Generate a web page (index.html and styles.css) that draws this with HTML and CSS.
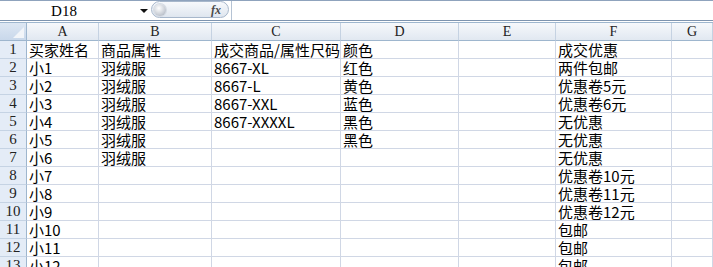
FILE: index.html
```html
<!DOCTYPE html>
<html lang="zh-CN">
<head>
  <meta charset="UTF-8" />
  <title>Book1 - Excel</title>
  <link rel="stylesheet" href="styles.css">
</head>
<body>

  <!-- formula bar -->
  <div class="formula-bar">
    <div class="name-box">
      <span class="cell-ref">D18</span>
      <span class="drop-arrow"></span>
    </div>
    <div class="fx-pill">
      <span class="knob"></span>
      <span class="fx">fx</span>
    </div>
    <div class="formula-input"></div>
  </div>

  <div class="sheet">
    <div class="row head-row">
      <div class="corner"></div>
      <div class="col-head">A</div>
      <div class="col-head">B</div>
      <div class="col-head">C</div>
      <div class="col-head">D</div>
      <div class="col-head">E</div>
      <div class="col-head">F</div>
      <div class="col-head">G</div>
    </div>

    <div class="row"><div class="row-head">1</div><div class="cell">买家姓名</div><div class="cell">商品属性</div><div class="cell">成交商品/属性尺码</div><div class="cell">颜色</div><div class="cell"></div><div class="cell">成交优惠</div><div class="cell"></div></div>
    <div class="row"><div class="row-head">2</div><div class="cell">小1</div><div class="cell">羽绒服</div><div class="cell">8667-XL</div><div class="cell">红色</div><div class="cell"></div><div class="cell">两件包邮</div><div class="cell"></div></div>
    <div class="row"><div class="row-head">3</div><div class="cell">小2</div><div class="cell">羽绒服</div><div class="cell">8667-L</div><div class="cell">黄色</div><div class="cell"></div><div class="cell">优惠卷5元</div><div class="cell"></div></div>
    <div class="row"><div class="row-head">4</div><div class="cell">小3</div><div class="cell">羽绒服</div><div class="cell">8667-XXL</div><div class="cell">蓝色</div><div class="cell"></div><div class="cell">优惠卷6元</div><div class="cell"></div></div>
    <div class="row"><div class="row-head">5</div><div class="cell">小4</div><div class="cell">羽绒服</div><div class="cell">8667-XXXXL</div><div class="cell">黑色</div><div class="cell"></div><div class="cell">无优惠</div><div class="cell"></div></div>
    <div class="row"><div class="row-head">6</div><div class="cell">小5</div><div class="cell">羽绒服</div><div class="cell"></div><div class="cell">黑色</div><div class="cell"></div><div class="cell">无优惠</div><div class="cell"></div></div>
    <div class="row"><div class="row-head">7</div><div class="cell">小6</div><div class="cell">羽绒服</div><div class="cell"></div><div class="cell"></div><div class="cell"></div><div class="cell">无优惠</div><div class="cell"></div></div>
    <div class="row"><div class="row-head">8</div><div class="cell">小7</div><div class="cell"></div><div class="cell"></div><div class="cell"></div><div class="cell"></div><div class="cell">优惠卷10元</div><div class="cell"></div></div>
    <div class="row"><div class="row-head">9</div><div class="cell">小8</div><div class="cell"></div><div class="cell"></div><div class="cell"></div><div class="cell"></div><div class="cell">优惠卷11元</div><div class="cell"></div></div>
    <div class="row"><div class="row-head">10</div><div class="cell">小9</div><div class="cell"></div><div class="cell"></div><div class="cell"></div><div class="cell"></div><div class="cell">优惠卷12元</div><div class="cell"></div></div>
    <div class="row"><div class="row-head">11</div><div class="cell">小10</div><div class="cell"></div><div class="cell"></div><div class="cell"></div><div class="cell"></div><div class="cell">包邮</div><div class="cell"></div></div>
    <div class="row"><div class="row-head">12</div><div class="cell">小11</div><div class="cell"></div><div class="cell"></div><div class="cell"></div><div class="cell"></div><div class="cell">包邮</div><div class="cell"></div></div>
    <div class="row"><div class="row-head">13</div><div class="cell">小12</div><div class="cell"></div><div class="cell"></div><div class="cell"></div><div class="cell"></div><div class="cell">包邮</div><div class="cell"></div></div>
  </div>

</body>
</html>
```

FILE: styles.css
```css
html, body {
  margin: 0;
  height: 267px;
  overflow: hidden;
  background: #fff;
}

body {
  font-family: "Noto Sans CJK SC", sans-serif;
  color: #000;
}

/* formula bar */
.formula-bar {
  display: flex;
  height: 19px;
  border-top: 1px solid #8fa3bd;
  border-bottom: 1px solid #7d93ae;
  background: #fff;
}

.name-box {
  width: 151px;
  display: flex;
  align-items: center;
}

.cell-ref {
  width: 128px;
  text-align: center;
  font-family: "Liberation Serif", serif;
  font-size: 15px;
  line-height: 18px;
}

.drop-arrow {
  margin-left: 12px;
  width: 0;
  height: 0;
  border-left: 4px solid transparent;
  border-right: 4px solid transparent;
  border-top: 4px solid #111;
}

.fx-pill {
  width: 78px;
  height: 17px;
  box-sizing: border-box;
  border: 1px solid #a7b7cb;
  border-radius: 9px;
  background: linear-gradient(#f7f9fc, #dfe6ef);
  display: flex;
  align-items: center;
  justify-content: space-between;
  padding: 0 7px 0 2px;
}

.knob {
  width: 12px;
  height: 12px;
  border-radius: 50%;
  background: radial-gradient(circle at 40% 35%, #ffffff, #c9ced6 60%, #9fa7b3);
  box-shadow: 0 0 0 1px #d5dbe4;
}

.fx {
  font-family: "Liberation Serif", serif;
  font-style: italic;
  font-weight: bold;
  font-size: 12px;
  color: #4a4a4a;
  line-height: 14px;
}

.formula-input {
  flex: 1;
  border-left: 1px solid #b5c3d4;
  margin-left: 2px;
  background: #fff;
}

/* sheet grid */
.sheet {
  margin-top: 1px;
  border-top: 1px solid #9eb6ce;
  background: #fff;
}

.row {
  display: grid;
  grid-template-columns: 27px 72px 113px 129px 118px 97px 116px 1fr;
  height: 18px;
}

.row > div {
  box-sizing: border-box;
  border-right: 1px solid #d0d7e5;
  border-bottom: 1px solid #d0d7e5;
  overflow-x: clip;
  white-space: nowrap;
}

.head-row > div {
  background: linear-gradient(#f6f8fb, #e1e8f1);
  border-right-color: #c5d2e2;
  border-bottom-color: #9eb6ce;
  text-align: center;
  font-family: "Liberation Serif", serif;
  font-size: 14px;
  line-height: 17px;
  color: #222;
}

.head-row .corner {
  background: linear-gradient(#dde7f3, #c9d8eb);
  border-right-color: #9eb6ce;
  position: relative;
}

.corner::after {
  content: "";
  position: absolute;
  right: 2px;
  bottom: 2px;
  width: 0;
  height: 0;
  border-left: 11px solid transparent;
  border-bottom: 11px solid #f2f5f9;
}

.row .row-head {
  background: #e4ecf7;
  border-right-color: #9eb6ce;
  border-bottom-color: #c5d3e4;
  text-align: center;
  font-family: "Liberation Serif", serif;
  font-size: 15px;
  line-height: 17px;
  color: #222;
}

.cell {
  padding: 1px 0 0 2px;
  font-size: 15px;
  line-height: 16px;
}
```
